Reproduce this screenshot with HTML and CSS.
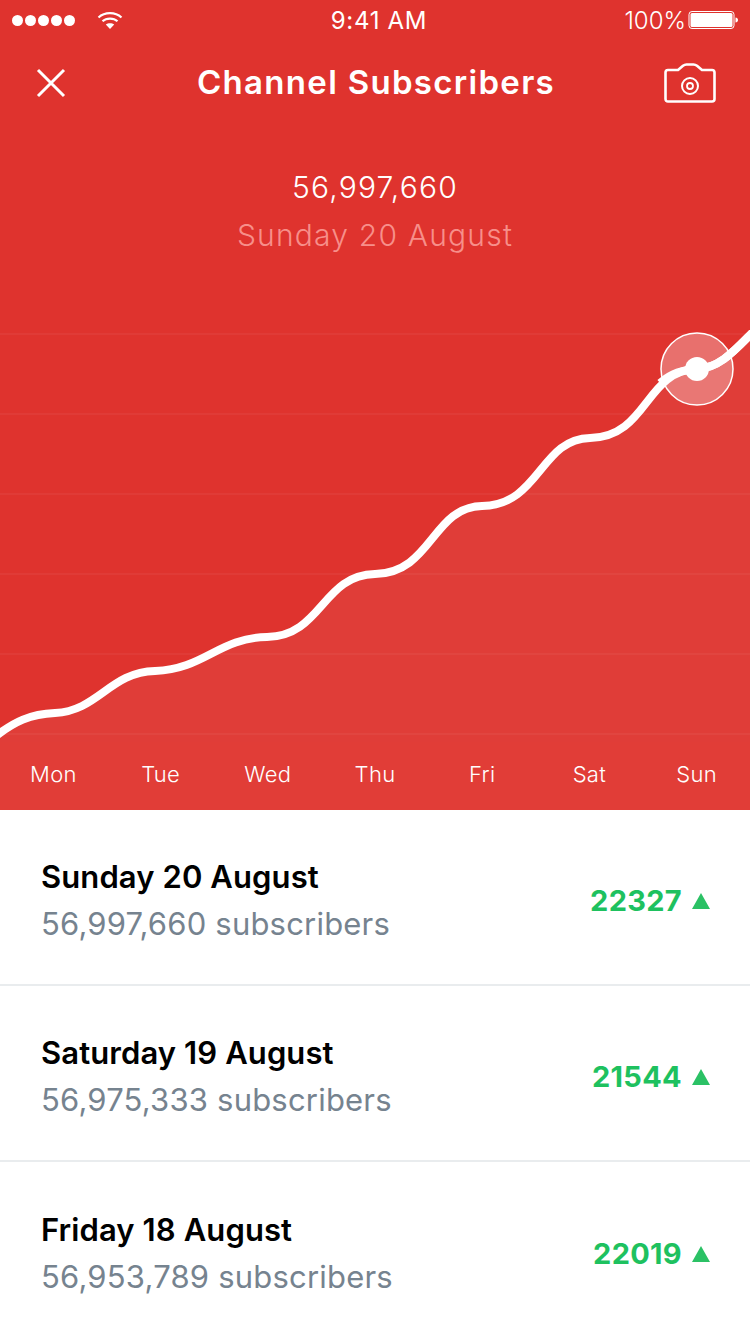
FILE: index.html
```html
<!doctype html>
<html lang="en">
<head>
  <meta charset="UTF-8">
  <meta name="viewport" content="width=device-width, initial-scale=1.0">
  <title>Channel Subscribers</title>
  <link rel="stylesheet" href="styles.css">
</head>
<body>
  <div class="hero">
    <div class="status-bar">
      <div class="status-left">
        <div class="signal"><i></i><i></i><i></i><i></i><i></i></div>
        <svg class="wifi" width="26" height="20" viewBox="0 0 26 20">
          <path d="M1.5 7.5C7.8 1.7 18.200 1.700 24.500 7.500" fill="none" stroke="#fff" stroke-width="2.200"/>
          <path d="M5.500 11.300C9.500 7.700 16.500 7.700 20.500 11.300" fill="none" stroke="#fff" stroke-width="2.200"/>
          <path d="M13 19L8.800 14.500C11 12.700 15 12.700 17.200 14.500Z" fill="#fff"/>
        </svg>
      </div>
      <div class="status-time">9:41 AM</div>
      <div class="status-right">
        <span>100%</span>
        <svg width="50" height="20" viewBox="0 0 50 20">
          <rect x="1" y="1.500" width="45" height="17" rx="3" fill="none" stroke="#fff" stroke-width="1"/>
          <rect x="2.500" y="3" width="42" height="14" rx="1.500" fill="#fff"/>
          <path d="M47.500 7.500C49 7.500 50 8.500 50 10S49 12.500 47.500 12.500Z" fill="#fff"/>
        </svg>
      </div>
    </div>

    <div class="nav">
      <svg class="nav-close" width="30" height="30" viewBox="0 0 30 30">
        <path d="M2 2L28 28M28 2L2 28" fill="none" stroke="#fff" stroke-width="3"/>
      </svg>
      <h1>Channel Subscribers</h1>
      <svg class="nav-camera" width="52" height="40" viewBox="0 0 52 40">
        <path d="M4 7H14L19 2.800C20 2 21 1.500 22.500 1.500H29.500C31 1.500 32 2 33 2.800L38 7H48C49.500 7 50.500 8 50.500 9.500V36C50.500 37.500 49.500 38.500 48 38.500H4C2.500 38.500 1.500 37.500 1.500 36V9.500C1.500 8 2.500 7 4 7Z" fill="none" stroke="#fff" stroke-width="2.600" stroke-linejoin="round"/>
        <circle cx="26" cy="23" r="8" fill="none" stroke="#fff" stroke-width="2"/>
        <circle cx="26" cy="23" r="3" fill="none" stroke="#fff" stroke-width="1.800"/>
      </svg>
    </div>

    <div class="summary">
      <div class="summary-count">56,997,660</div>
      <div class="summary-date">Sunday 20 August</div>
    </div>

    <svg class="chart" width="750" height="412" viewBox="0 330 750 412">
      <path class="chart-area" d="M-4 736C14 722 30 714 55 713C98 711 110 672 155 671C205 669 218 638 267 637C322 636 322 575 375 574C432 573 432 507 482 506C540 505 540 439 590 438C648 437 645 370 697 369C720 368 735 350 754 331V742H-4Z"/>
      <line class="grid" x1="0" x2="750" y1="334" y2="334"/>
      <line class="grid" x1="0" x2="750" y1="414" y2="414"/>
      <line class="grid" x1="0" x2="750" y1="494" y2="494"/>
      <line class="grid" x1="0" x2="750" y1="574" y2="574"/>
      <line class="grid" x1="0" x2="750" y1="654" y2="654"/>
      <line class="grid" x1="0" x2="750" y1="734" y2="734"/>
      <path class="chart-line" d="M-4 736C14 722 30 714 55 713C98 711 110 672 155 671C205 669 218 638 267 637C322 636 322 575 375 574C432 573 432 507 482 506C540 505 540 439 590 438C648 437 645 370 697 369C720 368 735 350 754 331"/>
      <circle class="marker-ring" cx="697" cy="369" r="36"/>
      <path class="chart-line" d="M660 383C672 373 682 370 697 369C720 368 735 350 754 331"/>
      <circle class="marker-dot" cx="697" cy="369" r="12"/>
    </svg>

    <div class="days">
      <span>Mon</span><span>Tue</span><span>Wed</span><span>Thu</span><span>Fri</span><span>Sat</span><span>Sun</span>
    </div>
  </div>

  <ul class="rows">
    <li class="row">
      <div>
        <div class="row-date">Sunday 20 August</div>
        <div class="row-total">56,997,660 subscribers</div>
      </div>
      <div class="row-change">22327<i class="up"></i></div>
    </li>
    <li class="row">
      <div>
        <div class="row-date">Saturday 19 August</div>
        <div class="row-total">56,975,333 subscribers</div>
      </div>
      <div class="row-change">21544<i class="up"></i></div>
    </li>
    <li class="row">
      <div>
        <div class="row-date">Friday 18 August</div>
        <div class="row-total">56,953,789 subscribers</div>
      </div>
      <div class="row-change">22019<i class="up"></i></div>
    </li>
  </ul>
</body>
</html>
```

FILE: styles.css
```css
* {
  box-sizing: border-box;
}

body {
  margin: 0;
  width: 750px;
  height: 1334px;
  overflow: hidden;
  background-color: #fff;
  font-family: 'Inter', sans-serif;
}

.hero {
  height: 810px;
  background-color: #df332e;
  color: #fff;
}

.status-bar {
  height: 40px;
  padding: 0 12px;
  display: grid;
  grid-template-columns: 1fr auto 1fr;
  align-items: center;
  font-size: 24px;
  font-weight: 300;
}

.status-left {
  display: flex;
  align-items: center;
  gap: 22px;
}

.signal {
  display: flex;
  gap: 2px;
}

.signal i {
  width: 11px;
  height: 11px;
  border-radius: 50%;
  background-color: #fff;
}

.status-time {
  padding-left: 8px;
  font-weight: 400;
  letter-spacing: 0.7px;
}

.status-right {
  display: flex;
  justify-content: flex-end;
  align-items: center;
  gap: 2px;
}

.nav {
  height: 86px;
  padding: 0 34px 0 36px;
  display: grid;
  grid-template-columns: 1fr auto 1fr;
  align-items: center;
}

.nav h1 {
  margin: 0 0 2px;
  font-size: 33px;
  font-weight: 600;
  letter-spacing: 1.3px;
}

.nav-camera {
  justify-self: end;
}

.summary {
  height: 204px;
  padding-top: 41px;
  text-align: center;
  font-size: 30px;
  font-weight: 300;
  letter-spacing: 1.2px;
}

.summary-count {
  line-height: 40px;
}

.summary-date {
  margin-top: 8px;
  line-height: 40px;
  color: #f78f8a;
}

.chart {
  display: block;
  overflow: hidden;
}

.chart-area {
  fill: rgba(255, 255, 255, 0.05);
}

.grid {
  stroke: rgba(255, 255, 255, 0.045);
  stroke-width: 2;
}

.chart-line {
  fill: none;
  stroke: #fff;
  stroke-width: 8;
}

.marker-ring {
  fill: rgba(255, 255, 255, 0.3);
  stroke: #fff;
  stroke-width: 1.500;
}

.marker-dot {
  fill: #fff;
}

.days {
  height: 68px;
  padding-top: 19px;
  display: grid;
  grid-template-columns: repeat(7, 107.200px);
  justify-content: center;
  background-color: #e13d37;
  text-align: center;
  font-size: 22px;
  font-weight: 300;
  letter-spacing: 0.3px;
}

.rows {
  margin: 0;
  padding: 0;
  list-style: none;
}

.row {
  height: 176px;
  padding: 7px 40px 0 41px;
  display: flex;
  justify-content: space-between;
  align-items: center;
  border-bottom: 2px solid #e9ecee;
}

.row:last-child {
  border-bottom: 0;
}

.row-date {
  font-size: 31px;
  font-weight: 600;
  line-height: 44px;
  letter-spacing: 0.1px;
  color: #000;
}

.row-total {
  margin-top: 3px;
  font-size: 31px;
  line-height: 44px;
  color: #76838f;
  letter-spacing: 0.2px;
}

.row-change {
  display: flex;
  align-items: center;
  gap: 10px;
  font-size: 29px;
  font-weight: 700;
  letter-spacing: 0.3px;
  color: #1ec15f;
}

.up {
  width: 0;
  height: 0;
  border-left: 9px solid transparent;
  border-right: 9px solid transparent;
  border-bottom: 16px solid #2bc165;
}
```
